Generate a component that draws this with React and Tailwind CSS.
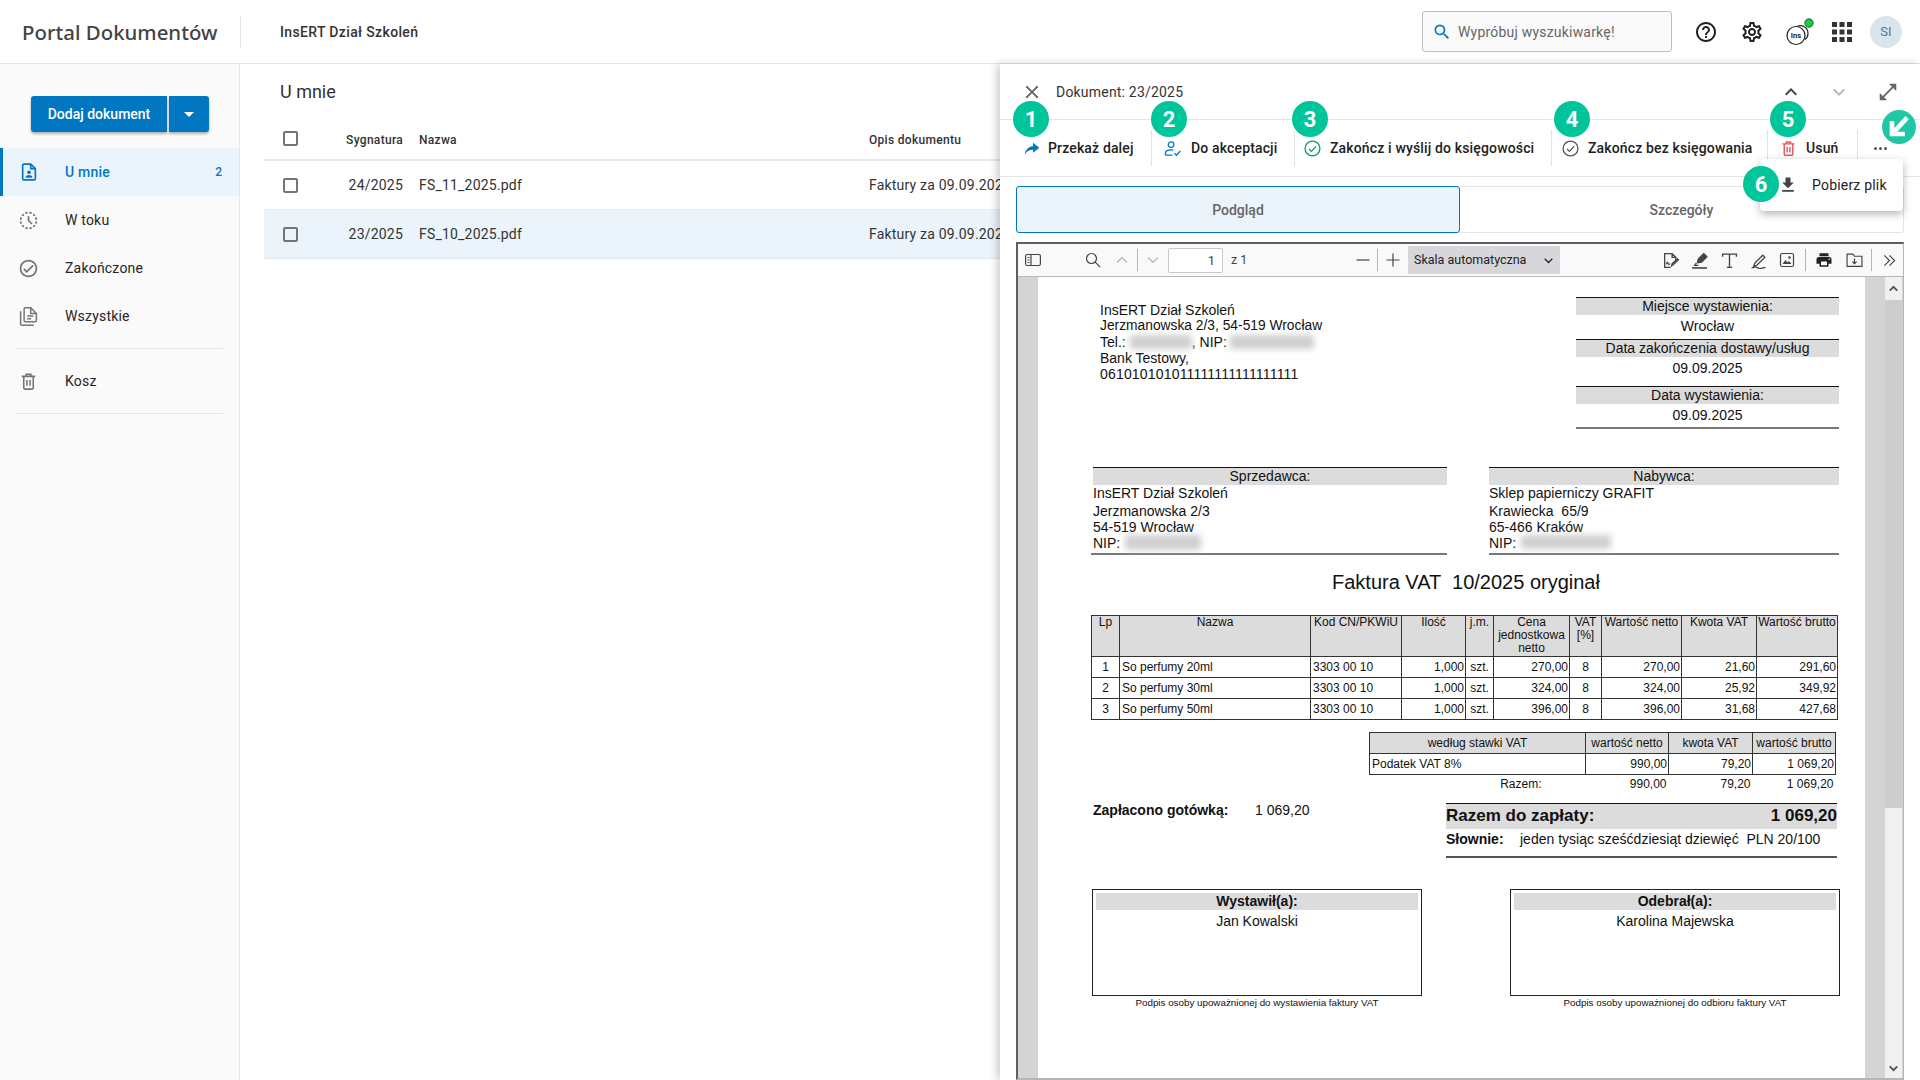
import React from "react";
import { MdHelpOutline, MdOutlineSettings, MdSearch, MdOutlineHistoryToggleOff, MdOutlineCheckCircle, MdPrint, MdOpenInFull, MdFileDownload, MdClose, MdKeyboardArrowUp, MdKeyboardArrowDown } from "react-icons/md";

const DocUser = ({ className }) => (
  <svg viewBox="0 0 24 24" className={className} fill="none" stroke="currentColor" strokeWidth="2">
    <path d="M14 2.500H6a1.600 1.600 0 0 0-1.600 1.600v15.800A1.600 1.600 0 0 0 6 21.500h12a1.600 1.600 0 0 0 1.600-1.600V8z" />
    <path d="M14 2.500V8h5.600" />
    <circle cx="12" cy="12.400" r="2.200" fill="currentColor" stroke="none" />
    <path d="M7.800 19c0-2.400 2-3.500 4.200-3.500s4.200 1.100 4.200 3.500z" fill="currentColor" stroke="none" />
  </svg>
);
const Docs = ({ className }) => (
  <svg viewBox="0 0 24 24" className={className} fill="none" stroke="currentColor" strokeWidth="1.700">
    <path d="M3 6v14.200A1.800 1.800 0 0 0 4.800 22H18" />
    <path d="M14.500 2H8.500A1.500 1.500 0 0 0 7 3.500v13A1.500 1.500 0 0 0 8.500 18h11a1.500 1.500 0 0 0 1.500-1.500V8.500z" />
    <path d="M14.500 2v6.500H21M10.500 11.500h7M10.500 14.500h4.500" />
  </svg>
);
const Trash = ({ className }) => (
  <svg viewBox="0 0 24 24" className={className} fill="none" stroke="currentColor" strokeWidth="2">
    <path d="M6 6.500V20a1.600 1.600 0 0 0 1.600 1.600h8.800A1.600 1.600 0 0 0 18 20V6.500M3.500 5.500h17M9 5V2.800h6V5M10 10v7.500M14 10v7.500" />
  </svg>
);
const Share = ({ className }) => (
  <svg viewBox="0 0 24 24" className={className} fill="currentColor">
    <path d="M13.500 4 23 11.500l-9.500 7.500v-4.400C8 14.400 4 16.500 1 22 2 15 6 9.800 13.500 9.200z" />
  </svg>
);
const UserCheck = ({ className }) => (
  <svg viewBox="0 0 24 24" className={className} fill="none" stroke="currentColor" strokeWidth="1.800">
    <circle cx="10" cy="6.500" r="4" />
    <path d="M2 21.500v-2.500c0-3 3-5 8-5 1.300 0 2.500.1 3.500.4M2 21.500h10M14.500 18.500l3 3 5.500-6" />
  </svg>
);
const CircleOk = ({ className }) => (
  <svg viewBox="0 0 24 24" className={className} fill="none" stroke="currentColor" strokeWidth="1.800">
    <circle cx="12" cy="12" r="10.500" />
    <path d="m7 12.500 3.500 3.500L17 9" />
  </svg>
);
const Apps = ({ className }) => (
  <svg viewBox="0 0 20 20" className={className} fill="currentColor">
    <rect x="0" y="0" width="5" height="5" /><rect x="7.500" y="0" width="5" height="5" /><rect x="15" y="0" width="5" height="5" />
    <rect x="0" y="7.500" width="5" height="5" /><rect x="7.500" y="7.500" width="5" height="5" /><rect x="15" y="7.500" width="5" height="5" />
    <rect x="0" y="15" width="5" height="5" /><rect x="7.500" y="15" width="5" height="5" /><rect x="15" y="15" width="5" height="5" />
  </svg>
);
const InsCoin = ({ className }) => (
  <svg viewBox="0 0 30 30" className={className} fill="none" stroke="#222" strokeWidth="1.200">
    <path d="M12 9.500c5-2.500 11 1 11 7 0 2.800-1 4.500-3 6" />
    <circle cx="11" cy="18.500" r="9" fill="#fff" />
    <text x="11" y="21.200" textAnchor="middle" fontSize="7.500" fontWeight="700" fill="#222" stroke="none" fontFamily="Roboto, sans-serif">Ins</text>
    <circle cx="24" cy="6" r="4.200" fill="#13d13c" stroke="#14421f" strokeWidth="0.800" />
  </svg>
);

const Tb = ({ className, children, sw = 1.2 }) => (
  <svg viewBox="0 0 16 16" className={className} fill="none" stroke="currentColor" strokeWidth={sw}>{children}</svg>
);

const Badge = ({ className, children }) => (
  <div className={"absolute flex h-[36px] w-[36px] items-center justify-center rounded-full bg-[#00c49a] text-[22px] font-bold text-white " + className}>{children}</div>
);

const Blur = ({ className }) => <span className={"absolute bg-[#cfcfcf] blur-[3px] " + className} />;

const NavItem = ({ icon, label, active, count }) => (
  <div className={active
    ? "flex h-[48px] items-center border-l-[3px] border-[#0077c0] bg-[#ebf3fb] pl-[18px] text-[#0077c0]"
    : "flex h-[48px] items-center border-l-[3px] border-transparent pl-[17px] text-[#757575]"}>
    <div className="flex w-[16px] items-center justify-center">{icon}</div>
    <span className={active ? "ml-[28px] flex-1 text-[14px] font-medium tracking-[0.2px]" : "ml-[29px] flex-1 text-[14px] tracking-[0.2px] text-[#262626]"}>{label}</span>
    {count && <span className="mr-[17px] text-[12px] font-medium">{count}</span>}
  </div>
);

const Check = () => <div className="h-[15px] w-[15px] rounded-[2px] border-2 border-[#757575] bg-transparent" />;

const Row = ({ sel, id, file }) => (
  <div className={sel
    ? "flex h-[49px] items-center border-b border-[#e3e8ec] bg-[#ebf3fb] text-[14px] tracking-[0.2px] text-[#333]"
    : "flex h-[49px] items-center border-b border-[#e8e8e8] text-[14px] tracking-[0.2px] text-[#333]"}>
    <div className="ml-[19px]"><Check /></div>
    <div className="w-[105px] text-right">{id}</div>
    <div className="ml-[16px] w-[450px]">{file}</div>
    <div className="whitespace-nowrap">Faktury za 09.09.2025</div>
  </div>
);

const Action = ({ className, children, label }) => (
  <div className={"flex h-[36px] items-center border-r border-[#e2e2e2] text-[14px] font-medium tracking-[0.15px] text-[#222] " + className}>
    {children}
    <span className="whitespace-nowrap pt-[1px]">{label}</span>
  </div>
);

const invoiceRows = [
  ["1", "So perfumy 20ml", "270,00", "270,00", "21,60", "291,60"],
  ["2", "So perfumy 30ml", "324,00", "324,00", "25,92", "349,92"],
  ["3", "So perfumy 50ml", "396,00", "396,00", "31,68", "427,68"],
];

const Th = ({ children }) => <th className="border border-[#333] bg-[#dcdcdc] px-0 align-top text-[12px] font-normal leading-[13px]">{children}</th>;
const Tl = ({ children }) => <td className="border border-[#333] px-[2px] text-left">{children}</td>;
const Tr = ({ children }) => <td className="border border-[#333] px-[1px] text-right">{children}</td>;
const Tc = ({ children }) => <td className="border border-[#333] px-0 text-center">{children}</td>;

const GrayHead = ({ children }) => (
  <div className="h-[18px] border-t border-[#111] bg-[#dcdcdc] text-center text-[14px] leading-[17px]">{children}</div>
);

function Invoice() {
  return (
    <div className="h-[801px] w-[827px] overflow-hidden bg-white font-['Liberation_Sans',Arial,sans-serif] text-[14px] text-[#111]">
      <div className="flex pt-[20px]">
        <div className="relative ml-[62px] mt-[5px] w-[476px] text-[14px] leading-[16px]">
          <div>InsERT Dział Szkoleń</div>
          <div className="text-[13.800px]">Jerzmanowska 2/3, 54-519 Wrocław</div>
          <div className="whitespace-pre">Tel.:                 , NIP:</div>
          <div>Bank Testowy,</div>
          <div className="tracking-[0.18px]">061010101011111111111111111</div>
          <Blur className="left-[30px] top-[33px] h-[14px] w-[62px]" />
          <Blur className="left-[130px] top-[33px] h-[14px] w-[84px]" />
        </div>
        <div className="w-[263px]">
          <GrayHead>Miejsce wystawienia:</GrayHead>
          <div className="h-[24px] text-center leading-[23px]">Wrocław</div>
          <GrayHead>Data zakończenia dostawy/usług</GrayHead>
          <div className="h-[29px] text-center leading-[22px]">09.09.2025</div>
          <GrayHead>Data wystawienia:</GrayHead>
          <div className="h-[25px] border-b-2 border-[#777] text-center leading-[23px]">09.09.2025</div>
        </div>
      </div>

      <div className="mt-[38px] flex">
        <div className="relative ml-[55px] w-[354px]">
          <GrayHead>Sprzedawca:</GrayHead>
          <div className="leading-[16px]">InsERT Dział Szkoleń</div>
          <div className="mt-[2px] leading-[16px]">Jerzmanowska 2/3</div>
          <div className="leading-[16px]">54-519 Wrocław</div>
          <div className="h-[18px] leading-[16px]">NIP:</div>
          <div className="-ml-[2px] h-[2px] bg-[#777]" />
          <Blur className="left-[32px] top-[68px] h-[15px] w-[76px]" />
        </div>
        <div className="relative ml-[42px] w-[350px]">
          <GrayHead>Nabywca:</GrayHead>
          <div className="leading-[16px]">Sklep papierniczy GRAFIT</div>
          <div className="mt-[2px] whitespace-pre leading-[16px]">Krawiecka  65/9</div>
          <div className="leading-[16px]">65-466 Kraków</div>
          <div className="h-[18px] leading-[16px]">NIP:</div>
          <div className="h-[2px] bg-[#777]" />
          <Blur className="left-[32px] top-[68px] h-[14px] w-[90px]" />
        </div>
      </div>

      <div className="ml-[294px] mt-[13px] h-[28px] whitespace-pre text-[20px] leading-[28px]">Faktura VAT  10/2025 oryginał</div>

      <table className="ml-[53px] mt-[19px] w-[746px] table-fixed border-collapse text-[12px] leading-[14px]">
        <colgroup>
          <col className="w-[28px]" /><col className="w-[191px]" /><col className="w-[91px]" /><col className="w-[64px]" /><col className="w-[28px]" />
          <col className="w-[76px]" /><col className="w-[32px]" /><col className="w-[80px]" /><col className="w-[75px]" /><col className="w-[81px]" />
        </colgroup>
        <thead>
          <tr className="h-[41px]">
            <Th>Lp</Th><Th>Nazwa</Th><Th>Kod CN/PKWiU</Th><Th>Ilość</Th><Th>j.m.</Th><Th>Cena jednostkowa netto</Th><Th>VAT [%]</Th><Th>Wartość netto</Th><Th>Kwota VAT</Th><Th>Wartość brutto</Th>
          </tr>
        </thead>
        <tbody>
          {invoiceRows.map((r) => (
            <tr key={r[0]} className="h-[21px]">
              <Tc>{r[0]}</Tc><Tl>{r[1]}</Tl><Tl>3303 00 10</Tl><Tr>1,000</Tr><Tc>szt.</Tc><Tr>{r[2]}</Tr><Tc>8</Tc><Tr>{r[3]}</Tr><Tr>{r[4]}</Tr><Tr>{r[5]}</Tr>
            </tr>
          ))}
        </tbody>
      </table>

      <table className="ml-[331px] mt-[12px] w-[466px] table-fixed border-collapse text-[12px] leading-[14px]">
        <colgroup>
          <col className="w-[216px]" /><col className="w-[83px]" /><col className="w-[84px]" /><col className="w-[83px]" />
        </colgroup>
        <tbody>
          <tr className="h-[21px] bg-[#dcdcdc] text-center">
            <td className="border border-[#333]">według stawki VAT</td><td className="border border-[#333]">wartość netto</td><td className="border border-[#333]">kwota VAT</td><td className="border border-[#333]">wartość brutto</td>
          </tr>
          <tr className="h-[21px]">
            <Tl>Podatek VAT 8%</Tl><Tr>990,00</Tr><Tr>79,20</Tr><Tr>1 069,20</Tr>
          </tr>
          <tr className="h-[18px] text-right">
            <td className="pr-[44px]">Razem:</td><td className="pr-[2px]">990,00</td><td className="pr-[2px]">79,20</td><td className="pr-[2px]">1 069,20</td>
          </tr>
        </tbody>
      </table>

      <div className="mt-[10px] flex">
        <div className="ml-[55px] flex w-[353px] text-[14px] leading-[14px]">
          <span className="w-[162px] font-bold">Zapłacono gotówką:</span>
          <span>1 069,20</span>
        </div>
        <div className="w-[391px]">
          <div className="flex h-[26px] items-center justify-between border-t border-[#111] bg-[#dcdcdc] text-[17px] font-bold">
            <span>Razem do zapłaty:</span><span>1 069,20</span>
          </div>
          <div className="flex h-[29px] items-start border-b-2 border-[#555] pt-[2px] text-[14px] leading-[16px]">
            <b className="w-[74px]">Słownie:</b>
            <span className="whitespace-pre">jeden tysiąc sześćdziesiąt dziewięć  PLN 20/100</span>
          </div>
        </div>
      </div>

      <div className="ml-[54px] mt-[31px] flex gap-[88px]">
        {[
          ["Wystawił(a):", "Jan Kowalski", "Podpis osoby upoważnionej do wystawienia faktury VAT"],
          ["Odebrał(a):", "Karolina Majewska", "Podpis osoby upoważnionej do odbioru faktury VAT"],
        ].map((b) => (
          <div key={b[0]} className="w-[330px]">
            <div className="h-[107px] border border-[#222] px-[3px] pt-[3px] text-center">
              <div className="h-[17px] bg-[#dcdcdc] text-[14px] font-bold leading-[17px]">{b[0]}</div>
              <div className="mt-[3px] leading-[16px]">{b[1]}</div>
            </div>
            <div className="mt-[1px] text-center text-[9.800px] leading-[11px]">{b[2]}</div>
          </div>
        ))}
      </div>
    </div>
  );
}

export default function App() {
  return (
    <div className="relative flex h-[1080px] w-[1920px] flex-col overflow-hidden bg-white font-['Roboto',sans-serif] text-[#222]">
      <header className="flex h-[64px] shrink-0 items-center border-b border-[#e5e5e5] bg-white">
        <div className="ml-[22px] w-[218px] pt-[1px] font-['Noto_Sans',sans-serif] text-[20.400px] font-medium text-[#444]">Portal Dokumentów</div>
        <div className="h-[32px] w-px bg-[#e5e5e5]" />
        <div className="ml-[39px] pt-[1px] text-[14px] font-medium tracking-[0.35px] text-[#333]">InsERT Dział Szkoleń</div>
        <div className="ml-auto flex h-[41px] w-[250px] items-center rounded-[3px] border border-[#bdbdbd] bg-[#fafafa] pl-[9px] text-[14px] tracking-[0.2px] text-[#666]">
          <MdSearch className="h-[20px] w-[20px] text-[#0077c0]" />
          <span className="ml-[6px] pt-[1px]">Wypróbuj wyszukiwarkę!</span>
        </div>
        <MdHelpOutline className="ml-[22px] h-[24px] w-[24px] text-[#222]" />
        <MdOutlineSettings className="ml-[22px] h-[24px] w-[24px] text-[#222]" />
        <InsCoin className="ml-[21px] h-[30px] w-[30px]" />
        <Apps className="ml-[17px] h-[20px] w-[20px] text-[#333]" />
        <div className="ml-[18px] mr-[18px] flex h-[32px] w-[32px] items-center justify-center rounded-full bg-[#d9e4eb] text-[13px] text-[#4d7a96]">SI</div>
      </header>

      <div className="flex min-h-0 flex-1">
        <aside className="w-[240px] shrink-0 border-r border-[#e5e5e5] bg-[#fafafa]">
          <div className="ml-[31px] mt-[32px] flex h-[36px] gap-[2px] text-white">
            <div className="flex w-[136px] items-center justify-center rounded-l-[3px] bg-[#0077c0] text-[14px] font-medium shadow-[0_2px_3px_rgba(0,0,0,0.3)]">Dodaj dokument</div>
            <div className="flex w-[40px] items-center justify-center rounded-r-[3px] bg-[#0077c0] shadow-[0_2px_3px_rgba(0,0,0,0.3)]">
              <div className="h-0 w-0 border-x-[5px] border-t-[5px] border-x-transparent border-t-white" />
            </div>
          </div>
          <nav className="mt-[16px]">
            <NavItem active icon={<DocUser className="h-[20px] w-[20px] shrink-0 text-[#0077c0]" />} label="U mnie" count="2" />
            <NavItem icon={<MdOutlineHistoryToggleOff className="h-[21px] w-[21px] shrink-0" />} label="W toku" />
            <NavItem icon={<MdOutlineCheckCircle className="h-[21px] w-[21px] shrink-0" />} label="Zakończone" />
            <NavItem icon={<Docs className="h-[21px] w-[21px] shrink-0" />} label="Wszystkie" />
            <div className="mx-[16px] mt-[8px] border-b border-[#e5e5e5]" />
            <div className="mt-[8px]"><NavItem icon={<Trash className="h-[19px] w-[19px] shrink-0" />} label="Kosz" /></div>
            <div className="mx-[16px] mt-[8px] border-b border-[#e5e5e5]" />
          </nav>
        </aside>

        <main className="min-w-0 flex-1 overflow-hidden">
          <div className="flex h-[54px] items-center pl-[40px] text-[18px] text-[#333]">U mnie</div>
          <div className="ml-[24px] w-[1200px]">
            <div className="flex h-[43px] items-center border-b-2 border-[#e8e8e8] text-[12px] font-medium tracking-[0.3px] text-[#333]">
              <div className="ml-[19px]"><Check /></div>
              <div className="w-[105px] pt-[2px] text-right">Sygnatura</div>
              <div className="ml-[16px] w-[450px] pt-[2px]">Nazwa</div>
              <div className="pt-[2px]">Opis dokumentu</div>
            </div>
            <Row id="24/2025" file="FS_11_2025.pdf" />
            <Row sel id="23/2025" file="FS_10_2025.pdf" />
          </div>
        </main>
      </div>

      <section className="absolute bottom-0 right-0 top-[64px] w-[920px] bg-white shadow-[-3px_0_8px_rgba(0,0,0,0.2)]">
        <div className="flex h-[56px] items-center border-b border-[#e5e5e5] pt-[1px]">
          <MdClose className="ml-[21px] h-[22px] w-[22px] text-[#666]" />
          <span className="ml-[13px] text-[14px] tracking-[0.2px] text-[#333]">Dokument: 23/2025</span>
          <MdKeyboardArrowUp className="ml-auto h-[24px] w-[24px] text-[#444]" />
          <MdKeyboardArrowDown className="ml-[24px] h-[24px] w-[24px] text-[#bbb]" />
          <MdOpenInFull className="ml-[26px] mr-[21px] h-[22px] w-[22px] text-[#666]" />
        </div>
        <div className="flex h-[57px] items-center border-b border-[#e5e5e5] pl-[16px]">
          <Action className="w-[136px] gap-[8px] pl-[8px]" label="Przekaż dalej"><Share className="h-[16px] w-[16px] text-[#0077c0]" /></Action>
          <Action className="w-[143px] gap-[10px] pl-[12px]" label="Do akceptacji"><UserCheck className="h-[17px] w-[17px] text-[#0077c0]" /></Action>
          <Action className="w-[257px] gap-[9px] pl-[9px]" label="Zakończ i wyślij do księgowości"><CircleOk className="h-[17px] w-[17px] text-[#0a9a6a]" /></Action>
          <Action className="w-[216px] gap-[9px] pl-[10px]" label="Zakończ bez księgowania"><CircleOk className="h-[17px] w-[17px] text-[#555]" /></Action>
          <Action className="w-[90px] gap-[9px] pl-[12px]" label="Usuń"><Trash className="h-[17px] w-[17px] text-[#e2575c]" /></Action>
          <div className="ml-[16px] flex gap-[2px]">
            <span className="h-[3px] w-[3px] rounded-full bg-[#555]" /><span className="h-[3px] w-[3px] rounded-full bg-[#555]" /><span className="h-[3px] w-[3px] rounded-full bg-[#555]" />
          </div>
        </div>

        <div className="mx-[16px] mt-[9px] flex h-[47px] text-[14px] font-medium text-[#666]">
          <div className="flex w-[444px] items-center justify-center rounded-[3px] border border-[#0077c0] bg-[#ebf3fb] pt-[1px]">Podgląd</div>
          <div className="flex flex-1 items-center justify-center rounded-r-[3px] border border-l-0 border-[#e5e5e5] pt-[1px]">Szczegóły</div>
        </div>

        <div className="mx-[16px] mt-[9px] border-b-2 border-l-2 border-r-[1px] border-t-2 border-b-[#b5b5b5] border-l-[#5f5f5f] border-r-[#b5b5b5] border-t-[#5f5f5f]">
          <div className="flex h-[33px] items-center border-b border-[#b8b8b8] bg-[#f9f9fa] text-[#444]">
            <Tb className="ml-[7px] h-[16px] w-[16px]"><rect x=".6" y="2.500" width="14.800" height="11" rx="1.500" /><path d="M6 2.500v11M2.500 5.500h2M2.500 8h2M2.500 10.500h2" /></Tb>
            <Tb className="ml-[44px] h-[16px] w-[16px]"><circle cx="6.500" cy="6.500" r="5" /><path d="m10.200 10.200 5 5" /></Tb>
            <Tb className="ml-[13px] h-[16px] w-[16px] text-[#b5b5b5]"><path d="m3 10.500 5-5 5 5" /></Tb>
            <div className="ml-[7px] h-[22px] w-px bg-[#b5b5b5]" />
            <Tb className="ml-[7px] h-[16px] w-[16px] text-[#b5b5b5]"><path d="m3 5.500 5 5 5-5" /></Tb>
            <div className="ml-[7px] flex h-[25px] w-[55px] items-center justify-end rounded-[2px] border border-[#c8c8c8] bg-white pr-[7px] pt-[1px] text-[13px]">1</div>
            <span className="ml-[8px] w-[16px] whitespace-nowrap pt-[1px] text-[12.500px]">z 1</span>
            <Tb className="ml-[108px] h-[16px] w-[16px]"><path d="M1.500 8h13" /></Tb>
            <div className="ml-[6px] h-[22px] w-px bg-[#b5b5b5]" />
            <Tb className="ml-[7px] h-[16px] w-[16px]"><path d="M1.500 8h13M8 1.500v13" /></Tb>
            <div className="ml-[7px] flex h-[28px] w-[152px] items-center justify-between bg-[#d7d7db] pl-[6px] pr-[6px] pt-[1px] text-[12.500px] text-[#222]">
              <span>Skala automatyczna</span>
              <Tb className="h-[11px] w-[11px]" sw={1.800}><path d="m2.500 5.500 5.500 5.500 5.500-5.500" /></Tb>
            </div>
            <Tb className="ml-[102px] h-[17px] w-[17px]"><path d="M8 14.500H2.500v-13h7l3.500 3.500v2.500M9.500 1.500V5H13M4 11.500c1-2.500 1.500-2.500 2 0 .5 1 1-.5 1.500 0M9 13l.5-2 5-4.500 1 1-5 4.500z" /></Tb>
            <Tb className="ml-[12px] h-[17px] w-[17px]"><path d="m6 10 1-3.500 5-5 3 3-5 5z" fill="currentColor" /><path d="M5 10.500 3.500 12.500h3.500" /><path d="M1 15h14" strokeWidth="1.500" /></Tb>
            <Tb className="ml-[13px] h-[17px] w-[17px]"><path d="M1.500 4.500V2h13v2.500M8 2v12.500M5.500 14.500h5" strokeWidth="1.300" /></Tb>
            <Tb className="ml-[12px] h-[17px] w-[17px]"><path d="m4.500 10.500-1 3 3-1L14 5l-2-2zM1.500 15c3-1 5-1 6 0s4 .5 7-.5" /></Tb>
            <Tb className="ml-[12px] h-[16px] w-[16px]"><rect x="1.500" y="1.500" width="13" height="13" rx="1.500" /><path d="m3.500 12 3-4 2 2.500 1.500-1.500 2.500 3z" fill="currentColor" stroke="none" /><circle cx="10.500" cy="5.500" r="1.200" fill="currentColor" stroke="none" /></Tb>
            <div className="ml-[10px] h-[22px] w-px bg-[#b5b5b5]" />
            <MdPrint className="ml-[9px] h-[18px] w-[18px] text-[#222]" />
            <Tb className="ml-[13px] h-[17px] w-[17px]"><path d="M1 4V13.500h14V4H8L6.500 2H1zM8 6v5M6 9l2 2 2-2" strokeWidth="1.100" /></Tb>
            <div className="ml-[8px] h-[22px] w-px bg-[#b5b5b5]" />
            <Tb className="ml-[10px] h-[15px] w-[15px]"><path d="m2.500 2.500 5.500 5.500-5.500 5.500M8 2.500l5.500 5.500L8 13.500" /></Tb>
          </div>
          <div className="flex h-[801px] bg-[#d4d4d7]">
            <div className="ml-[20px]"><Invoice /></div>
            <div className="ml-[20px] flex w-[17px] flex-col bg-[#f0f0f0]">
              <div className="flex h-[23px] items-center justify-center"><Tb className="h-[11px] w-[11px] text-[#505050]" sw={2.500}><path d="m2.500 11 5.500-5.500 5.500 5.500" /></Tb></div>
              <div className="h-[508px] bg-[#cdcdcd]" />
              <div className="mt-auto flex h-[20px] items-center justify-center"><Tb className="h-[11px] w-[11px] text-[#505050]" sw={2.500}><path d="m2.500 5 5.500 5.500 5.500-5.500" /></Tb></div>
            </div>
          </div>
        </div>

        <div className="absolute left-[760px] top-[95px] flex h-[52px] w-[143px] items-center rounded-[4px] bg-white pl-[21px] text-[14px] tracking-[0.2px] text-[#222] shadow-[0_3px_8px_rgba(0,0,0,0.3)]">
          <MdFileDownload className="-ml-[3px] h-[20px] w-[20px] text-[#444]" />
          <span className="ml-[14px]">Pobierz plik</span>
        </div>

        <Badge className="left-[13px] top-[37px]">1</Badge>
        <Badge className="left-[151px] top-[37px]">2</Badge>
        <Badge className="left-[292px] top-[37px]">3</Badge>
        <Badge className="left-[554px] top-[37px]">4</Badge>
        <Badge className="left-[770px] top-[37px]">5</Badge>
        <Badge className="left-[743px] top-[102px]">6</Badge>
        <div className="absolute left-[882px] top-[46px] flex h-[34px] w-[34px] items-center justify-center rounded-full bg-[#1fc8a3]">
          <svg viewBox="0 0 24 24" className="h-[28px] w-[28px]" fill="none" stroke="#fff" strokeWidth="4"><path d="M19 4 7 17M6 7v11h11" /></svg>
        </div>
      </section>
    </div>
  );
}
